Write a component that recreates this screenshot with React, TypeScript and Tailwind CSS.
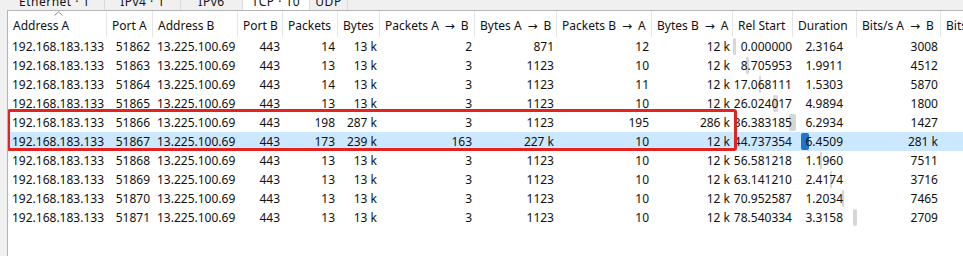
import React from 'react';

const COLS = [
  { label: 'Address A', w: 99, align: 'left' },
  { label: 'Port A', w: 46, align: 'right' },
  { label: 'Address B', w: 85, align: 'left' },
  { label: 'Port B', w: 45, align: 'right' },
  { label: 'Packets', w: 55, align: 'right' },
  { label: 'Bytes', w: 42, align: 'right' },
  { label: 'Packets A → B', w: 95, align: 'right' },
  { label: 'Bytes A → B', w: 82, align: 'right' },
  { label: 'Packets B → A', w: 95, align: 'right' },
  { label: 'Bytes B → A', w: 81, align: 'right' },
  { label: 'Rel Start', w: 60, align: 'clip' },
  { label: 'Duration', w: 64, align: 'dur' },
  { label: 'Bits/s A → B', w: 84, align: 'right' },
  { label: 'Bits/s B → A', w: 90, align: 'right' },
];

const ROWS = [
  ['192.168.183.133', '51862', '13.225.100.69', '443', '14', '13 k', '2', '871', '12', '12 k', '0.000000', '2.3164', '3008', ''],
  ['192.168.183.133', '51863', '13.225.100.69', '443', '13', '13 k', '3', '1123', '10', '12 k', '8.705953', '1.9911', '4512', ''],
  ['192.168.183.133', '51864', '13.225.100.69', '443', '14', '13 k', '3', '1123', '11', '12 k', '17.068111', '1.5303', '5870', ''],
  ['192.168.183.133', '51865', '13.225.100.69', '443', '13', '13 k', '3', '1123', '10', '12 k', '26.024017', '4.9894', '1800', ''],
  ['192.168.183.133', '51866', '13.225.100.69', '443', '198', '287 k', '3', '1123', '195', '286 k', '36.383185', '6.2934', '1427', ''],
  ['192.168.183.133', '51867', '13.225.100.69', '443', '173', '239 k', '163', '227 k', '10', '12 k', '44.737354', '6.4509', '281 k', ''],
  ['192.168.183.133', '51868', '13.225.100.69', '443', '13', '13 k', '3', '1123', '10', '12 k', '56.581218', '1.1960', '7511', ''],
  ['192.168.183.133', '51869', '13.225.100.69', '443', '13', '13 k', '3', '1123', '10', '12 k', '63.141210', '2.4174', '3716', ''],
  ['192.168.183.133', '51870', '13.225.100.69', '443', '13', '13 k', '3', '1123', '10', '12 k', '70.952587', '1.2034', '7465', ''],
  ['192.168.183.133', '51871', '13.225.100.69', '443', '13', '13 k', '3', '1123', '10', '12 k', '78.540334', '3.3158', '2709', ''],
];

const TABS = [
  { label: 'Ethernet · 1', w: 100, active: false },
  { label: 'IPv4 · 1', w: 76, active: false },
  { label: 'IPv6', w: 62, active: false },
  { label: 'TCP · 10', w: 67, active: true },
  { label: 'UDP', w: 38, active: false },
];

const SELECTED = 5;

// header labels: the arrow gets a fixed slot so the spacing matches
const Label = ({ text }: { text: string }) => {
  const parts = text.split(' → ');
  if (parts.length === 1) return <>{text}</>;
  return (
    <>
      {parts[0]}
      <span className="inline-block w-[22px] text-center" style={{ fontFamily: '"DejaVu Sans", sans-serif' }}>
        →
      </span>
      {parts[1]}
    </>
  );
};

const cellClass = (align: string) => {
  if (align === 'left') return 'justify-start pl-[4px]';
  if (align === 'clip') return 'justify-end pr-[1px]';
  if (align === 'dur') return 'justify-end pr-[14px]';
  return 'justify-end pr-[3px]';
};

export default function App() {
  return (
    <div
      className="w-[963px] h-[256px] overflow-hidden bg-[#f0f0f0] text-[12px] text-[#111]"
      style={{ fontFamily: '"Noto Sans", "Noto Sans CJK SC", sans-serif' }}
    >
      {/* tab strip, mostly scrolled out of view */}
      <div className="h-[10px] overflow-hidden flex items-end pl-[5px]">
        {TABS.map((t) => (
          <div
            key={t.label}
            style={{ width: t.w }}
            className={`h-[17px] shrink-0 flex items-center justify-center border-r border-[#d9d9d9] whitespace-nowrap leading-[16px] tracking-[0.5px] ${
              t.active ? 'bg-white' : 'bg-[#f0f0f0]'
            }`}
          >
            {t.label}
          </div>
        ))}
      </div>

      <div className="ml-[7px] h-[246px] bg-white border-l border-t border-[#b4b4b4] overflow-hidden">
        <div className="w-[1100px]">
          {/* header */}
          <div className="flex h-[26px] bg-white">
            {COLS.map((c, i) => (
              <div
                key={c.label}
                style={{ width: c.w }}
                className="relative shrink-0 flex items-center pt-[3px] pl-[5px] border-r border-[#e5e5e5] whitespace-nowrap overflow-hidden leading-[16px]"
              >
                {i === 0 && (
                  <svg className="absolute left-[46px] top-0" width="9" height="5" viewBox="0 0 9 5">
                    <path d="M0.5 4.5 L4.5 0.8 L8.5 4.5" fill="none" stroke="#8a8a8a" strokeWidth="1" />
                  </svg>
                )}
                <Label text={c.label} />
              </div>
            ))}
          </div>

          {/* rows */}
          <div className="relative">
            {ROWS.map((r, ri) => {
              const start = parseFloat(r[10]);
              const dur = parseFloat(r[11]);
              const sel = ri === SELECTED;
              return (
                <div key={ri} className={`relative flex h-[19px] ${sel ? 'bg-[#cce8ff]' : ''}`}>
                  <div
                    className={`absolute top-[1px] bottom-[1px] rounded-[2px] ${sel ? 'bg-[#1e74d0]' : 'bg-[#d6d6d6]'}`}
                    style={{ left: 725 + start * 1.53, width: Math.max(2, dur * 1.1) }}
                  />
                  {r.map((v, ci) => (
                    <div
                      key={ci}
                      style={{ width: COLS[ci].w }}
                      className={`relative shrink-0 flex items-center overflow-hidden whitespace-nowrap leading-[19px] ${cellClass(COLS[ci].align)}`}
                    >
                      <span className="shrink-0">{v}</span>
                    </div>
                  ))}
                </div>
              );
            })}

            {/* red highlight box drawn over rows 5–6 */}
            <div className="absolute left-[-1px] top-[72px] w-[730px] h-[42px] border-[3px] border-[#e3231f] rounded-[3px] pointer-events-none" />
          </div>
        </div>
      </div>
    </div>
  );
}
